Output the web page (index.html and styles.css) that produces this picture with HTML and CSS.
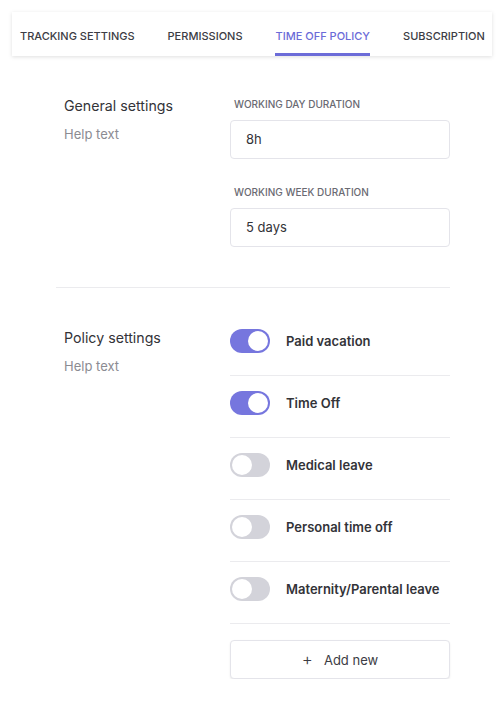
FILE: index.html
```html
<!DOCTYPE html>
<html>
<head>
<meta charset="utf-8">
<link rel="stylesheet" href="styles.css">
</head>
<body>
<nav class="tabs">
  <div class="tab">Tracking settings</div>
  <div class="tab">Permissions</div>
  <div class="tab active">Time off policy</div>
  <div class="tab">Subscription</div>
</nav>
<main class="content">
  <section class="section general">
    <div class="side">
      <div class="title">General settings</div>
      <div class="help">Help text</div>
    </div>
    <div class="fields">
      <label class="label">Working day duration</label>
      <div class="input">8h</div>
      <label class="label second">Working week duration</label>
      <div class="input">5 days</div>
    </div>
  </section>
  <section class="section policy">
    <div class="side">
      <div class="title">Policy settings</div>
      <div class="help">Help text</div>
    </div>
    <div class="fields">
      <div class="row"><span class="toggle on"></span><span class="name">Paid vacation</span></div>
      <div class="row"><span class="toggle on"></span><span class="name">Time Off</span></div>
      <div class="row"><span class="toggle"></span><span class="name">Medical leave</span></div>
      <div class="row"><span class="toggle"></span><span class="name">Personal time off</span></div>
      <div class="row"><span class="toggle"></span><span class="name">Maternity/Parental leave</span></div>
      <button class="add"><span class="plus">+</span>Add new</button>
    </div>
  </section>
</main>
</body>
</html>
```

FILE: styles.css
```css
* { box-sizing: border-box; }
body {
  margin: 0;
  background: #fff;
  font-family: Inter, "Noto Sans", sans-serif;
  color: #333338;
}
.tabs {
  margin: 12px 12px 0;
  height: 44px;
  display: flex;
  padding-left: 8px;
  background: #fff;
  box-shadow: 0 1px 4px rgba(0,0,0,0.13);
}
.tab {
  margin-right: 33px;
  font-size: 11px;
  font-weight: 500;
  text-transform: uppercase;
  color: #3c3c44;
  padding-top: 17px;
  line-height: 14px;
  white-space: nowrap;
}
.tab.active {
  color: #6b6bd8;
  border-bottom: 3px solid #6c6cd8;
}
.content {
  margin: 0 54px 0 56px;
}
.section {
  display: flex;
}
.general {
  padding: 40px 0 40px;
  border-bottom: 1px solid #ebebee;
}
.policy {
  padding-top: 26px;
}
.side {
  width: 174px;
  padding-left: 8px;
}
.policy .side { padding-top: 14px; }
.title {
  font-size: 14.2px;
  line-height: 20px;
  color: #333338;
}
.help {
  margin-top: 8px;
  font-size: 13px;
  line-height: 20px;
  color: #8b8b92;
}
.fields {
  width: 220px;
  display: flex;
  flex-direction: column;
}
.label {
  display: block;
  padding-left: 4px;
  font-size: 10px;
  line-height: 12px;
  font-weight: 500;
  text-transform: uppercase;
  color: #6a6a72;
  margin-top: 2px;
  margin-bottom: 10px;
}
.label.second { margin-top: 27px; }
.input {
  height: 39px;
  border: 1px solid #e4e4ea;
  border-radius: 4px;
  padding: 0 15px;
  font-size: 13px;
  line-height: 37px;
  color: #333338;
}
.row {
  display: flex;
  align-items: center;
  padding: 15px 0 22px;
  border-bottom: 1px solid #ebebee;
}
.toggle {
  position: relative;
  width: 40px;
  height: 24px;
  border-radius: 12px;
  background: #d3d3da;
  flex: none;
}
.toggle::after {
  content: "";
  position: absolute;
  top: 2px;
  left: 2px;
  width: 20px;
  height: 20px;
  border-radius: 50%;
  background: #fff;
}
.toggle.on { background: #7676de; }
.toggle.on::after { left: 18px; }
.name {
  margin-left: 16px;
  font-size: 13px;
  font-weight: 600;
  color: #333338;
}
.add {
  margin-top: 16px;
  height: 39px;
  width: 220px;
  background: #fff;
  border: 1px solid #e4e4ea;
  border-radius: 4px;
  box-shadow: 0 1px 2px rgba(0,0,0,0.08);
  font-family: Inter, "Noto Sans", sans-serif;
  font-size: 13px;
  color: #3c3c44;
  display: flex;
  align-items: center;
  justify-content: center;
}
.plus {
  font-size: 17px;
  font-weight: 300;
  margin-right: 11px;
  margin-top: -2px;
}
```
